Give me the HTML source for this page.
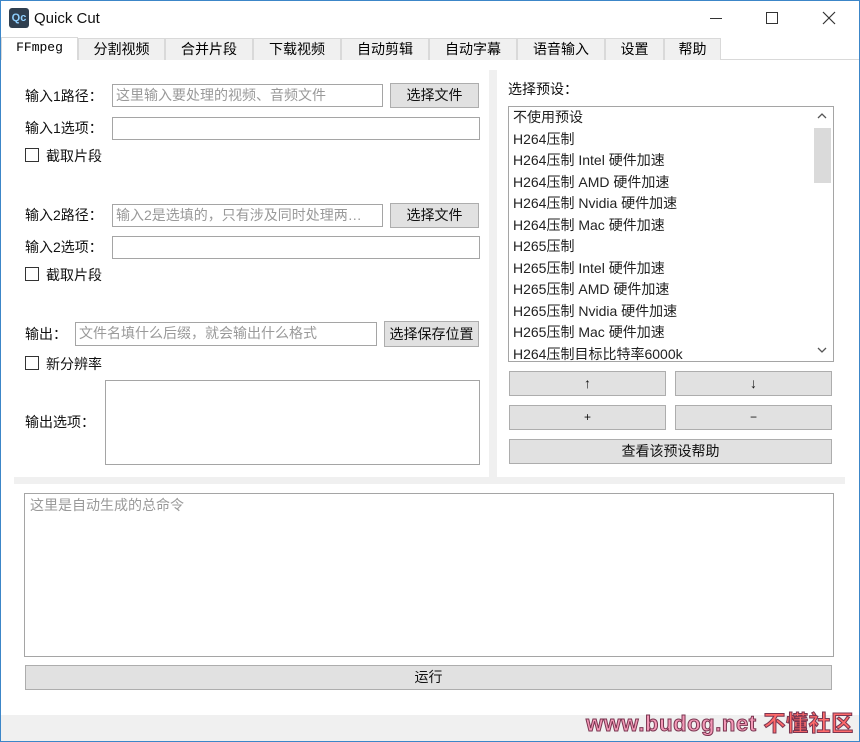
<!DOCTYPE html>
<html><head><meta charset="utf-8"><style>
*{box-sizing:border-box;margin:0;padding:0}
body{width:860px;height:742px;position:relative;background:#fff;font-family:"Liberation Sans","Noto Sans CJK SC",sans-serif;font-size:14px;color:#000;overflow:hidden}
.a{position:absolute}
.win{left:0;top:0;width:860px;height:742px;border:1px solid #3c86c8}
.tab{position:absolute;top:38px;height:22px;background:#f0f0f0;border:1px solid #d9d9d9;border-bottom:none;text-align:center;line-height:20px;font-size:14px}
.lbl{position:absolute;font-size:14px;line-height:16px;color:#111}
.fld{position:absolute;border:1px solid #a5a5a5;background:#fff;color:#999;font-size:14px;line-height:20px;padding-left:3px;white-space:nowrap;overflow:hidden}
.btn{position:absolute;background:#e1e1e1;border:1px solid #adadad;text-align:center;font-size:14px;color:#111}
.cb{position:absolute;width:14px;height:14px;border:1px solid #333;background:#fff}
.li{height:21.5px;line-height:21.5px;padding-left:4px;font-size:14px;color:#222;white-space:nowrap}
</style></head><body>
<div class="a win"></div>
<div class="a" style="left:9px;top:8px;width:20px;height:20px;background:#2f3f4f;border-radius:3px;color:#8fd0ff;font-size:11px;font-weight:bold;line-height:20px;text-align:center">Qc</div>
<div class="a" style="left:34px;top:10px;font-size:15px;color:#111">Quick Cut</div>
<div class="a" style="left:710px;top:18px;width:12px;height:1px;background:#333"></div>
<div class="a" style="left:766px;top:12px;width:12px;height:12px;border:1px solid #333"></div>
<svg class="a" style="left:822px;top:11px" width="14" height="14"><path d="M1 1L13 13M13 1L1 13" stroke="#333" stroke-width="1.2"/></svg>

<div class="a" style="left:1px;top:59px;width:858px;height:1px;background:#d9d9d9"></div>
<div class="tab" style="left:1px;width:77px;top:37px;height:23px;background:#fff;font-family:'Liberation Mono',monospace;font-size:13px">FFmpeg</div>
<div class="tab" style="left:78px;width:87px">分割视频</div>
<div class="tab" style="left:165px;width:88px">合并片段</div>
<div class="tab" style="left:253px;width:88px">下载视频</div>
<div class="tab" style="left:341px;width:88px">自动剪辑</div>
<div class="tab" style="left:429px;width:88px">自动字幕</div>
<div class="tab" style="left:517px;width:88px">语音输入</div>
<div class="tab" style="left:605px;width:59px">设置</div>
<div class="tab" style="left:664px;width:57px">帮助</div>

<div class="a" style="left:489px;top:70px;width:8px;height:408px;background:#f0f0f0"></div>
<div class="a" style="left:14px;top:477px;width:831px;height:7px;background:#f0f0f0"></div>

<div class="lbl" style="left:25px;top:88px">输入1路径：</div>
<div class="fld" style="left:112px;top:84px;width:271px;height:23px">这里输入要处理的视频、音频文件</div>
<div class="btn" style="left:390px;top:83px;width:89px;height:25px;line-height:23px">选择文件</div>
<div class="lbl" style="left:25px;top:120px">输入1选项：</div>
<div class="fld" style="left:112px;top:117px;width:368px;height:23px"></div>
<div class="cb" style="left:25px;top:148px"></div><div class="lbl" style="left:46px;top:148px">截取片段</div>

<div class="lbl" style="left:25px;top:207px">输入2路径：</div>
<div class="fld" style="left:112px;top:204px;width:271px;height:23px">输入2是选填的，只有涉及同时处理两…</div>
<div class="btn" style="left:390px;top:203px;width:89px;height:25px;line-height:23px">选择文件</div>
<div class="lbl" style="left:25px;top:239px">输入2选项：</div>
<div class="fld" style="left:112px;top:236px;width:368px;height:23px"></div>
<div class="cb" style="left:25px;top:267px"></div><div class="lbl" style="left:46px;top:267px">截取片段</div>

<div class="lbl" style="left:25px;top:326px">输出：</div>
<div class="fld" style="left:75px;top:322px;width:302px;height:24px">文件名填什么后缀，就会输出什么格式</div>
<div class="btn" style="left:384px;top:321px;width:95px;height:26px;line-height:24px">选择保存位置</div>
<div class="cb" style="left:25px;top:356px"></div><div class="lbl" style="left:46px;top:356px">新分辨率</div>
<div class="lbl" style="left:25px;top:414px">输出选项：</div>
<div class="fld" style="left:105px;top:380px;width:375px;height:85px"></div>

<div class="lbl" style="left:508px;top:81px">选择预设：</div>
<div class="a" style="left:508px;top:106px;width:326px;height:256px;border:1px solid #a5a5a5;padding-top:0px;overflow:hidden">
<div class="li">不使用预设</div><div class="li">H264压制</div><div class="li">H264压制 Intel 硬件加速</div><div class="li">H264压制 AMD 硬件加速</div><div class="li">H264压制 Nvidia 硬件加速</div><div class="li">H264压制 Mac 硬件加速</div><div class="li">H265压制</div><div class="li">H265压制 Intel 硬件加速</div><div class="li">H265压制 AMD 硬件加速</div><div class="li">H265压制 Nvidia 硬件加速</div><div class="li">H265压制 Mac 硬件加速</div><div class="li">H264压制目标比特率6000k</div>
<div class="a" style="left:303px;top:0;width:21px;height:254px;background:#fff"></div>
<svg class="a" style="left:308px;top:6px" width="10" height="6"><path d="M1 5L5 1L9 5" stroke="#555" fill="none" stroke-width="1.3"/></svg>
<div class="a" style="left:305px;top:21px;width:17px;height:55px;background:#dadada"></div>
<svg class="a" style="left:308px;top:240px" width="10" height="6"><path d="M1 1L5 5L9 1" stroke="#555" fill="none" stroke-width="1.3"/></svg>
</div>
<div class="btn" style="left:509px;top:371px;width:157px;height:25px;line-height:23px">↑</div>
<div class="btn" style="left:675px;top:371px;width:157px;height:25px;line-height:23px">↓</div>
<div class="btn" style="left:509px;top:405px;width:157px;height:25px;line-height:23px;font-size:12px">+</div>
<div class="btn" style="left:675px;top:405px;width:157px;height:25px;line-height:23px;font-size:12px">−</div>
<div class="btn" style="left:509px;top:439px;width:323px;height:25px;line-height:23px">查看该预设帮助</div>

<div class="fld" style="left:24px;top:493px;width:810px;height:164px;line-height:22px;padding-left:5px;color:#999">这里是自动生成的总命令</div>
<div class="btn" style="left:25px;top:665px;width:807px;height:25px;line-height:23px">运行</div>

<div class="a" style="left:1px;top:715px;width:858px;height:26px;background:#f0f0f0"></div>
<div class="a" style="left:586px;top:706px;font-size:22px;font-weight:bold;color:#f49ab8;-webkit-text-stroke:1px #7a3550;letter-spacing:0.6px;white-space:nowrap">www.budog.net <span style="color:#ff6a6a">不懂社区</span></div>
</body></html>
